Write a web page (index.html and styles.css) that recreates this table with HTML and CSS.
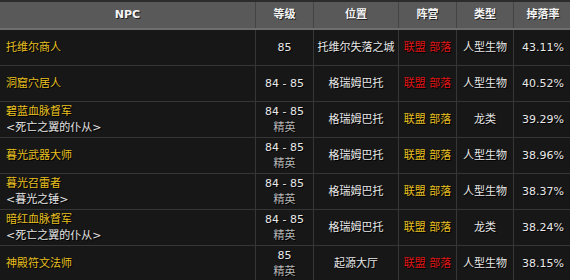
FILE: index.html
```html
<!DOCTYPE html>
<html>
<head>
<meta charset="utf-8">
<link rel="stylesheet" href="styles.css">
</head>
<body>
<table class="npc-table">
  <thead>
    <tr>
      <th class="c-npc">NPC</th>
      <th class="c-lvl">等级</th>
      <th class="c-loc">位置</th>
      <th class="c-fac">阵营</th>
      <th class="c-type">类型</th>
      <th class="c-drop">掉落率</th>
    </tr>
  </thead>
  <tbody>
    <tr>
      <td class="name"><span class="npc">托维尔商人</span></td>
      <td>85</td>
      <td>托维尔失落之城</td>
      <td><span class="red">联盟 部落</span></td>
      <td>人型生物</td>
      <td>43.11%</td>
    </tr>
    <tr>
      <td class="name"><span class="npc">洞窟穴居人</span></td>
      <td>84 - 85</td>
      <td>格瑞姆巴托</td>
      <td><span class="red">联盟 部落</span></td>
      <td>人型生物</td>
      <td>40.52%</td>
    </tr>
    <tr>
      <td class="name"><span class="npc">碧蓝血脉督军</span><br><span class="sub">&lt;死亡之翼的仆从&gt;</span></td>
      <td>84 - 85<br><span class="elite">精英</span></td>
      <td>格瑞姆巴托</td>
      <td><span class="yellow">联盟 部落</span></td>
      <td>龙类</td>
      <td>39.29%</td>
    </tr>
    <tr>
      <td class="name"><span class="npc">暮光武器大师</span></td>
      <td>84 - 85<br><span class="elite">精英</span></td>
      <td>格瑞姆巴托</td>
      <td><span class="yellow">联盟 部落</span></td>
      <td>人型生物</td>
      <td>38.96%</td>
    </tr>
    <tr>
      <td class="name"><span class="npc">暮光召雷者</span><br><span class="sub">&lt;暮光之锤&gt;</span></td>
      <td>84 - 85<br><span class="elite">精英</span></td>
      <td>格瑞姆巴托</td>
      <td><span class="yellow">联盟 部落</span></td>
      <td>人型生物</td>
      <td>38.37%</td>
    </tr>
    <tr>
      <td class="name"><span class="npc">暗红血脉督军</span><br><span class="sub">&lt;死亡之翼的仆从&gt;</span></td>
      <td>84 - 85<br><span class="elite">精英</span></td>
      <td>格瑞姆巴托</td>
      <td><span class="yellow">联盟 部落</span></td>
      <td>龙类</td>
      <td>38.24%</td>
    </tr>
    <tr>
      <td class="name"><span class="npc">神殿符文法师</span></td>
      <td>85<br><span class="elite">精英</span></td>
      <td>起源大厅</td>
      <td><span class="red">联盟 部落</span></td>
      <td>人型生物</td>
      <td>38.15%</td>
    </tr>
  </tbody>
</table>
</body>
</html>
```
FILE: styles.css
```css
html, body {
  margin: 0;
  padding: 0;
}
body {
  padding-top: 2px;
  background: #2c2c2c;
  overflow: hidden;
}
.npc-table {
  width: 571px;
  border-collapse: collapse;
  table-layout: fixed;
  font-family: "DejaVu Sans", "Noto Sans CJK SC", sans-serif;
  font-size: 11px;
  line-height: 16px;
  color: #e8e8e8;
  background: #171717;
}
.npc-table th {
  background: #595959;
  color: #f4f4f4;
  font-weight: bold;
  height: 26px;
  padding: 0;
  border: 1px solid #444;
  border-top: none;
  border-bottom: 2px solid #6e6e6e;
  text-shadow: 1px 1px 0 #222;
}
.npc-table th:first-child { border-left: none; }
.c-npc { width: 255px; }
.c-lvl { width: 57px; }
.c-loc { width: 84px; }
.c-fac { width: 57px; }
.c-type { width: 56px; }
.c-drop { width: 58px; }
.npc-table td {
  height: 33px;
  padding: 1px 3px;
  border: 1px solid #363636;
  text-align: center;
  vertical-align: middle;
  text-shadow: 1px 1px 0 #000;
  white-space: nowrap;
}
.npc-table td:first-child { border-left: none; }
.npc-table td.name {
  text-align: left;
  padding-left: 6px;
}
.npc { color: #e8c020; }
.sub { color: #e6e6e6; }
.elite { color: #b8b8b8; }
.red { color: #e01414; }
.yellow { color: #e8c020; }
```
